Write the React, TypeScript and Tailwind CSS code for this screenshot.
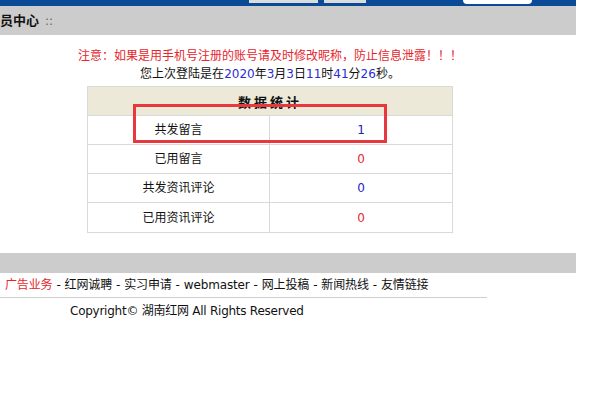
import React from 'react';

const stats = [
  { label: '共发留言', value: '1', color: 'text-[#2020c0]' },
  { label: '已用留言', value: '0', color: 'text-[#e5262d]' },
  { label: '共发资讯评论', value: '0', color: 'text-[#2323c8]' },
  { label: '已用资讯评论', value: '0', color: 'text-[#e5262d]' },
];

const links = ['红网诚聘', '实习申请', 'webmaster', '网上投稿', '新闻热线', '友情链接'];

export default function App() {
  return (
    <div
      className="w-[600px] h-[399px] bg-white text-[12px] text-[#222] overflow-hidden"
      style={{ fontFamily: '"DejaVu Sans", "Noto Sans CJK SC", sans-serif' }}
    >
      <div className="w-[576px]">
        {/* top nav strip */}
        <div className="h-[6px] bg-[#0b4a96] flex items-start">
          <div className="ml-[249px] w-[69px] h-[3px] bg-[#dcdcdc]" />
          <div className="ml-[6px] w-[42px] h-[3px] bg-[#dcdcdc]" />
          <div className="ml-[97px] w-[69px] h-[4px] bg-white rounded-b-[4px]" />
        </div>

        {/* title bar */}
        <div className="h-[29px] bg-[#cccccc] flex items-center">
          <span className="text-[13px] font-bold text-[#111]">员中心</span>
          <span className="ml-[6px] text-[#666]">::</span>
        </div>

        {/* content */}
        <div className="w-[540px] pt-[12px] text-center">
          <p className="leading-[18px] text-[#e5262d]">
            注意：如果是用手机号注册的账号请及时修改昵称，防止信息泄露！！！
          </p>
          <p className="leading-[18px] text-[#111]">
            您上次登陆是在<span className="text-[#2b2bd6]">2020</span>年<span className="text-[#2b2bd6]">3</span>月<span className="text-[#2b2bd6]">3</span>日<span className="text-[#2b2bd6]">11</span>时<span className="text-[#2b2bd6]">41</span>分<span className="text-[#2b2bd6]">26</span>秒。
          </p>

          <div className="relative mx-auto mt-[3px] w-[366px] border border-[#d9d9d9]">
            <div className="h-[29px] bg-[#ece9d8] border-b border-[#d9d9d9] flex items-center justify-center pt-[3px] text-[13px] font-bold tracking-[3px] text-[#111]">
              数据统计
            </div>
            {stats.map((s, i) => (
              <div
                key={s.label}
                className={`flex h-[29px] ${i < stats.length - 1 ? 'border-b border-[#d9d9d9]' : ''}`}
              >
                <div className="w-[182px] border-r border-[#d9d9d9] flex items-center justify-center text-[#111]">
                  {s.label}
                </div>
                <div className={`flex-1 flex items-center justify-center ${s.color}`}>{s.value}</div>
              </div>
            ))}
            {/* annotation box */}
            <div className="absolute left-[45px] top-[17px] w-[254px] h-[39px] border-[3px] border-[#e8383d]" />
          </div>
        </div>

        {/* bottom bar */}
        <div className="mt-[20px] h-[20px] bg-[#cccccc]" />

        <div className="w-[487px] h-[25px] border-b border-[#cfcfcf] pl-[5px] flex items-center tracking-[-0.15px] text-[#111]">
          <span className="text-[#e5262d]">广告业务</span>
          {links.map((l) => (
            <span key={l}>
              <span className="mx-[4px]">-</span>
              {l}
            </span>
          ))}
        </div>
        <div className="pl-[70px] h-[26px] flex items-center tracking-[-0.25px] text-[#111]">
          Copyright© 湖南红网 All Rights Reserved
        </div>
      </div>
    </div>
  );
}
